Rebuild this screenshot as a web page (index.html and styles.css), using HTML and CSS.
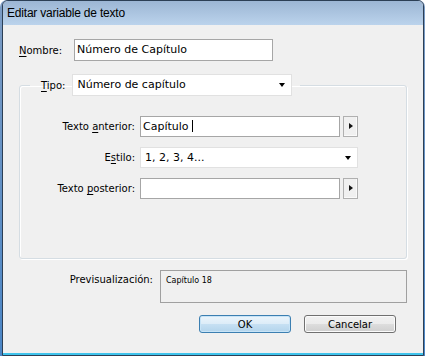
FILE: index.html
```html
<!DOCTYPE html>
<html lang="es">
<head>
    <meta charset="UTF-8">
    <title>Editar variable de texto</title>
    <link rel="stylesheet" href="styles.css">
</head>
<body>
<div class="frame">
    <div class="window">
        <div class="titlebar">Editar variable de texto</div>

        <div class="content">
            <!-- Nombre -->
            <div class="name-row">
                <label class="lbl" for="nombre"><u>N</u>ombre:</label>
                <div class="textbox name-box" id="nombre">Número de Capítulo</div>
            </div>

            <!-- Tipo group -->
            <fieldset class="group">
                <legend class="group-legend">
                    <span class="lbl"><u>T</u>ipo:</span>
                    <div class="combo tipo-combo">Número de capítulo<span class="arrow-down"></span></div>
                </legend>

                <div class="fields">
                    <span class="lbl right">Texto <u>a</u>nterior:</span>
                    <div class="field-with-btn">
                        <div class="textbox">Capítulo <span class="caret"></span></div>
                        <div class="side-btn"><span class="arrow-right"></span></div>
                    </div>

                    <span class="lbl right">E<u>s</u>tilo:</span>
                    <div class="combo estilo-combo">1, 2, 3, 4...<span class="arrow-down"></span></div>

                    <span class="lbl right">Texto <u>p</u>osterior:</span>
                    <div class="field-with-btn">
                        <div class="textbox"></div>
                        <div class="side-btn"><span class="arrow-right"></span></div>
                    </div>
                </div>
            </fieldset>

            <!-- Preview -->
            <div class="preview-row">
                <span class="lbl preview-lbl">Previsualización:</span>
                <div class="preview-box">Capítulo 18</div>
            </div>

            <div class="buttons">
                <button class="btn btn-default">OK</button>
                <button class="btn">Cancelar</button>
            </div>
        </div>
    </div>
</div>
</body>
</html>
```

FILE: styles.css
```css
/* Dialog window */
body {
    margin: 0;
    background-color: #ffffff;
    font-family: "DejaVu Sans", Verdana, sans-serif;
    font-size: 10px;
    color: #000;
}

.frame {
    width: 425px;
    height: 356px;
    box-sizing: border-box;
    padding: 0 1px 0 2px;
    background: linear-gradient(#7c9cc4, #4b86c6);
    border-radius: 7px 7px 0 0;
}

.window {
    height: 100%;
    box-sizing: border-box;
    border: 1px solid #2c3f55;
    border-radius: 6px 6px 0 0;
    background-color: #f0f0f0;
    box-shadow: inset 0 -2px 0 #3fc3ec;
    display: flex;
    flex-direction: column;
}

.titlebar {
    height: 24px;
    line-height: 25px;
    padding-left: 4px;
    font-family: "Liberation Sans", Arial, sans-serif;
    font-size: 12px;
    letter-spacing: -0.2px;
    background: linear-gradient(#9cb6d4, #bbd3ec);
    border-radius: 5px 5px 0 0;
}

.content {
    flex: 1;
}

.lbl {
    white-space: nowrap;
}

.lbl u {
    text-decoration-thickness: 1px;
    text-underline-offset: 2px;
}

/* Text fields */
.textbox {
    box-sizing: border-box;
    height: 21px;
    width: 200px;
    border: 1px solid #a6a6a6;
    background-color: #fff;
    font-size: 11px;
    line-height: 19px;
    padding-left: 2px;
    white-space: nowrap;
}

.caret {
    display: inline-block;
    width: 0;
    height: 12px;
    border-left: 1px solid #000;
    vertical-align: -2px;
}

.combo {
    position: relative;
    box-sizing: border-box;
    height: 21px;
    border: 1px solid #e1e1e1;
    background-color: #fff;
    font-size: 11px;
    line-height: 19px;
    padding-left: 4px;
    white-space: nowrap;
}

.arrow-down {
    position: absolute;
    right: 6px;
    top: 8px;
    border-left: 3px solid transparent;
    border-right: 3px solid transparent;
    border-top: 4px solid #000;
}

.name-row {
    display: flex;
    align-items: center;
    gap: 12px;
    margin: 14px 0 0 16px;
}

.name-box {
    width: 199px;
    height: 22px;
    line-height: 20px;
}

/* Group box with Tipo */
.group {
    width: 388px;
    box-sizing: border-box;
    margin: 13px 0 0 16px;
    padding: 20px 0 59px 0;
    border: 1px solid #d5dde3;
    border-radius: 3px;
    box-shadow: inset 1px 1px 0 #fff, 1px 1px 0 #fff;
}

.group-legend {
    display: flex;
    align-items: center;
    gap: 7px;
    margin-left: 10px;
    padding: 0 8px 0 11px;
}

.tipo-combo {
    width: 220px;
    height: 22px;
    line-height: 20px;
}

.fields {
    display: grid;
    grid-template-columns: 115px 218px;
    grid-template-rows: 21px 21px 21px;
    column-gap: 5px;
    row-gap: 10px;
    align-items: center;
}

.right {
    text-align: right;
}

.field-with-btn {
    display: flex;
    gap: 3px;
}

.side-btn {
    position: relative;
    box-sizing: border-box;
    width: 15px;
    height: 21px;
    border: 1px solid #b0b0b0;
    background-color: #f0f0f0;
    box-shadow: inset -1px -1px 0 #fafafa;
}

.arrow-right {
    position: absolute;
    left: 5px;
    top: 6px;
    border-top: 3px solid transparent;
    border-bottom: 3px solid transparent;
    border-left: 4px solid #111;
}

/* Preview */
.preview-row {
    display: flex;
    gap: 7px;
    margin: 11px 0 0 16px;
}

.preview-lbl {
    width: 134px;
    text-align: right;
    padding-top: 4px;
}

.preview-box {
    box-sizing: border-box;
    width: 247px;
    height: 33px;
    border: 1px solid #a0a0a0;
    font-size: 8px;
    padding: 5px 0 0 5px;
}

/* Buttons */
.buttons {
    display: flex;
    justify-content: flex-end;
    gap: 13px;
    margin-top: 12px;
    padding-right: 27px;
}

.btn {
    width: 92px;
    height: 18px;
    padding: 0;
    font-family: "DejaVu Sans", Verdana, sans-serif;
    font-size: 10px;
    color: #000;
    border: 1px solid #707070;
    border-radius: 3px;
    background: linear-gradient(#f2f2f2 0%, #ebebeb 50%, #dddddd 51%, #cfcfcf 100%);
    box-shadow: inset 0 0 0 1px #fbfbfb;
}

.btn-default {
    border-color: #3c7fb1;
    background: linear-gradient(#ecf5fb 0%, #dcecf8 50%, #c6e0f3 51%, #b3d4ec 100%);
    box-shadow: inset 0 0 0 1px #c8e4f7;
}
```
